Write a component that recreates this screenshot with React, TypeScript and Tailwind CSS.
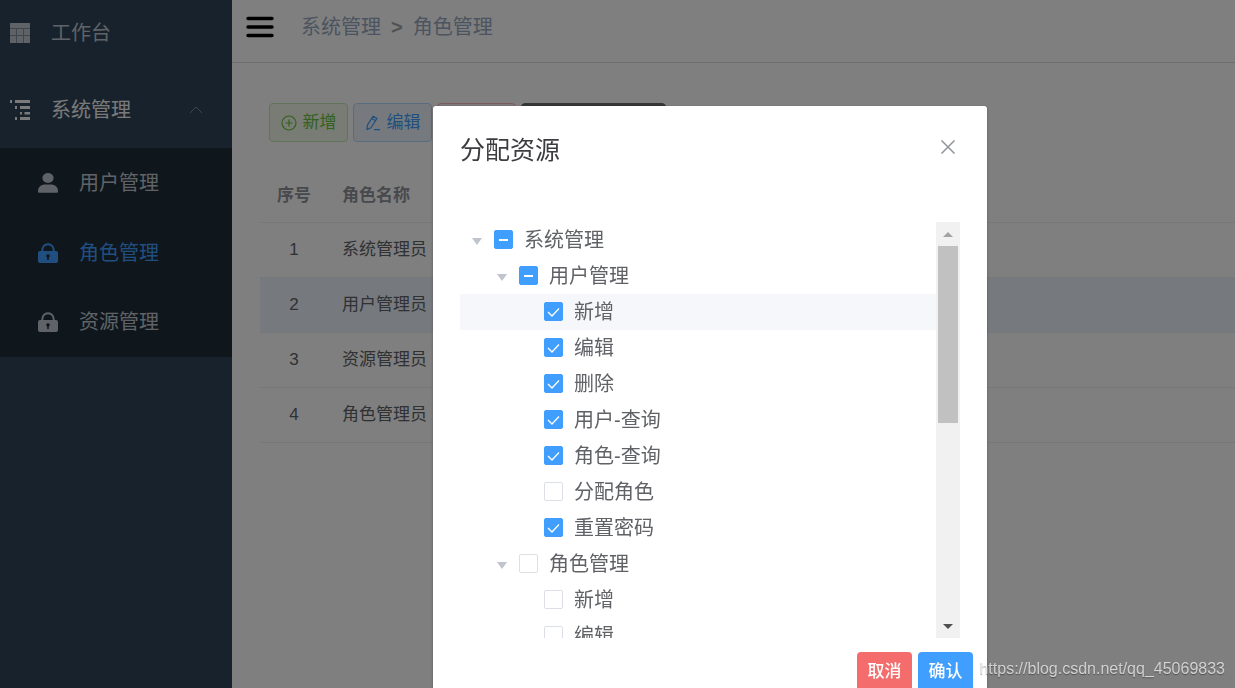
import React, { useState } from "react";

type CheckState = "checked" | "partial" | "empty";

interface TreeNode {
  id: string;
  label: string;
  level: 0 | 1 | 2;
  state: CheckState;
  active?: boolean;
}

const TREE: TreeNode[] = [
  { id: "system", label: "系统管理", level: 0, state: "partial" },
  { id: "user", label: "用户管理", level: 1, state: "partial" },
  { id: "user-add", label: "新增", level: 2, state: "checked", active: true },
  { id: "user-edit", label: "编辑", level: 2, state: "checked" },
  { id: "user-delete", label: "删除", level: 2, state: "checked" },
  { id: "user-query", label: "用户-查询", level: 2, state: "checked" },
  { id: "user-role-query", label: "角色-查询", level: 2, state: "checked" },
  { id: "user-assign", label: "分配角色", level: 2, state: "empty" },
  { id: "user-reset", label: "重置密码", level: 2, state: "checked" },
  { id: "role", label: "角色管理", level: 1, state: "empty" },
  { id: "role-add", label: "新增", level: 2, state: "empty" },
  { id: "role-edit", label: "编辑", level: 2, state: "empty" },
];

const ROLES = ["系统管理员", "用户管理员", "资源管理员", "角色管理员"];

const INDENT = ["pl-0", "pl-[25px]", "pl-[50px]"];

function GridIcon() {
  return (
    <svg viewBox="0 0 20 20" className="w-5 h-5 shrink-0" fill="currentColor">
      <path d="M0 0h20v20H0z" opacity="0.55" />
      <path d="M0 0h20v5H0zM0 6h6v6H0zM7 6h6v6H7zM14 6h6v6h-6zM0 13h6v7H0zM7 13h6v7H7zM14 13h6v7h-6z" />
    </svg>
  );
}

function TreeIcon() {
  return (
    <svg viewBox="0 0 20 20" className="w-5 h-5 shrink-0" fill="currentColor">
      <path d="M0 0h2v3H0zM5 0h15v3H5zM5 6h2v3H5zM10 6h10v3H10zM10 12h2v2.500h-2zM14.500 12H20v2.500h-5.500zM5 17h2v3H5zM10 17h10v3H10z" />
    </svg>
  );
}

function UserIcon() {
  return (
    <svg viewBox="0 0 20 20" className="w-5 h-5 shrink-0" fill="currentColor">
      <ellipse cx="10" cy="5" rx="5.600" ry="5" />
      <path d="M0 18.200C0 14 3.200 11.600 7 11.600h6c3.800 0 7 2.400 7 6.600 0 1-.6 1.600-1.600 1.600H1.600C.6 19.800 0 19.200 0 18.200z" />
    </svg>
  );
}

function LockIcon() {
  return (
    <svg viewBox="0 0 20 20" className="w-5 h-5 shrink-0" fill="currentColor">
      <path d="M4.200 8.500C4.200 4 6.500 1.200 10 1.200s5.800 2.800 5.800 7.300" fill="none" stroke="currentColor" strokeWidth="2" />
      <path
        fillRule="evenodd"
        d="M2 8h16a2 2 0 0 1 2 2v8a2 2 0 0 1-2 2H2a2 2 0 0 1-2-2v-8a2 2 0 0 1 2-2zM10 11.200a1.800 1.800 0 0 0-.8 3.400V17h1.600v-2.400a1.800 1.800 0 0 0-.8-3.400z"
      />
    </svg>
  );
}

function Sidebar() {
  return (
    <nav className="w-[232px] shrink-0 bg-[#30455a] text-xl text-[#bfc6d0]">
      <a href="#dashboard" className="flex items-center gap-[21px] h-[71px] pb-[6px] pl-[10px]">
        <GridIcon />
        工作台
      </a>
      <button type="button" className="flex items-center gap-[21px] w-full h-[77px] pl-[10px] pr-[29px] text-[#f4f4f5]">
        <TreeIcon />
        <span>系统管理</span>
        <svg viewBox="0 0 14 8" className="w-[14px] h-2 ml-auto text-[#7f8a96]" fill="none" stroke="currentColor">
          <path d="M1 7l6-6 6 6" />
        </svg>
      </button>
      <div className="bg-[#1f2e39]">
        <a href="#users" className="flex items-center gap-[21px] h-[70px] pl-[38px]">
          <UserIcon />
          用户管理
        </a>
        <a href="#roles" className="flex items-center gap-[21px] h-[69px] pl-[38px] text-[#409eff]">
          <LockIcon />
          角色管理
        </a>
        <a href="#resources" className="flex items-center gap-[21px] h-[70px] pl-[38px]">
          <LockIcon />
          资源管理
        </a>
      </div>
    </nav>
  );
}

function Header() {
  return (
    <header className="flex items-center h-[63px] pb-2 pl-[14px] border-b border-[#d8dce5]">
      <button type="button" aria-label="菜单" className="text-black">
        <svg viewBox="0 0 28 22" className="w-7 h-[22px]" stroke="currentColor" strokeWidth="3.400" strokeLinecap="round">
          <path d="M2 2.500h24M2 11h24M2 19.500h24" />
        </svg>
      </button>
      <div className="flex items-center gap-[10px] ml-[27px] text-xl text-[#97a8be]">
        <a href="#system">系统管理</a>
        <span className="font-bold text-[#a0a4aa]">&gt;</span>
        <span>角色管理</span>
      </div>
    </header>
  );
}

function Toolbar() {
  const base = "flex items-center justify-center gap-[6px] h-[39px] border rounded-[4px] text-[17px]";
  return (
    <div className="flex gap-[5px] pl-[9px]">
      <button type="button" className={`${base} w-[79px] bg-[#f0f9eb] border-[#c2e7b0] text-[#67c23a]`}>
        <svg viewBox="0 0 16 16" className="w-4 h-4" fill="none" stroke="currentColor" strokeWidth="1.200">
          <circle cx="8" cy="8" r="7" />
          <path d="M8 4.500v7M4.500 8h7" />
        </svg>
        新增
      </button>
      <button type="button" className={`${base} w-[79px] bg-[#ecf5ff] border-[#b3d8ff] text-[#409eff]`}>
        <svg viewBox="0 0 16 16" className="w-4 h-4" fill="none" stroke="currentColor" strokeWidth="1.200" strokeLinejoin="round">
          <path d="M8.200 1.200l3.800 2.200-6 9.400L2 14.600l.4-4.400zM6.800 3.600l3.800 2.200M9 14.600h6" />
        </svg>
        编辑
      </button>
      <button type="button" className={`${base} w-[79px] bg-[#fef0f0] border-[#fbb4b4] text-[#f56c6c]`}>
        删除
      </button>
      <button type="button" className={`${base} w-[145px] bg-[#6b6b6b] border-[#6b6b6b] text-white`}>
        分配资源
      </button>
    </div>
  );
}

function RoleTable() {
  return (
    <table className="w-full mt-[25px] text-[17px] text-[#606266]">
      <thead>
        <tr className="h-[55px] border-b border-[#ebeef5] text-[#909399]">
          <th className="w-[68px] pt-[3px] font-bold">序号</th>
          <th className="pt-[3px] pl-[14px] text-left font-bold">角色名称</th>
        </tr>
      </thead>
      <tbody>
        {ROLES.map((name, i) => (
          <tr key={name} className={`h-[55px] border-b border-[#ebeef5] ${i === 1 ? "bg-[#ecf5ff]" : ""}`}>
            <td className="text-center">{i + 1}</td>
            <td className="pl-[14px]">{name}</td>
          </tr>
        ))}
      </tbody>
    </table>
  );
}

function TreeRow({ node, onToggle }: { node: TreeNode; onToggle: (id: string) => void }) {
  const filled = node.state !== "empty";
  return (
    <li className={`flex items-center h-9 ${INDENT[node.level]} ${node.active ? "bg-[#f5f7fa]" : ""}`}>
      <span className="flex justify-center w-[34px] pt-[2px] shrink-0">
        {node.level < 2 && (
          <svg viewBox="0 0 10 7" className="w-[10px] h-[7px] text-[#c0c4cc]" fill="currentColor">
            <path d="M0 0h10L5 7z" />
          </svg>
        )}
      </span>
      <label className="flex items-center gap-[11px]">
        <span className="grid place-items-center pb-[2px]">
          <input
            type="checkbox"
            checked={node.state === "checked"}
            ref={(el) => {
              if (el) el.indeterminate = node.state === "partial";
            }}
            onChange={() => onToggle(node.id)}
            className={`appearance-none col-start-1 row-start-1 w-[19px] h-[19px] border rounded-[2px] ${filled ? "bg-[#409eff] border-[#409eff]" : "bg-white border-[#dcdfe6]"}`}
          />
          {filled && (
            <svg viewBox="0 0 19 19" className="col-start-1 row-start-1 w-[19px] h-[19px] pointer-events-none" fill="none" stroke="white">
              {node.state === "checked" ? (
                <path d="M4 10l4 4 7-7.500" strokeWidth="1.300" />
              ) : (
                <path d="M5 10h9" strokeWidth="2" />
              )}
            </svg>
          )}
        </span>
        {node.label}
      </label>
    </li>
  );
}

function ScrollBar() {
  return (
    <div className="flex flex-col items-center w-6 shrink-0 bg-[#f1f1f1]">
      <button type="button" aria-label="向上" className="flex items-center justify-center w-full h-6">
        <svg viewBox="0 0 10 5" className="w-[10px] h-[5px] text-[#a3a3a3]" fill="currentColor">
          <path d="M0 5h10L5 0z" />
        </svg>
      </button>
      <div className="w-5 h-[177px] bg-[#c1c1c1]" />
      <button type="button" aria-label="向下" className="flex items-center justify-center w-full h-6 mt-auto">
        <svg viewBox="0 0 10 5" className="w-[10px] h-[5px] text-[#505050]" fill="currentColor">
          <path d="M0 0h10L5 5z" />
        </svg>
      </button>
    </div>
  );
}

function ResourceDialog() {
  const [nodes, setNodes] = useState(TREE);

  const toggle = (id: string) =>
    setNodes((prev) => prev.map((n) => (n.id === id ? { ...n, state: n.state === "checked" ? "empty" : "checked" } : n)));

  return (
    <div role="dialog" aria-labelledby="dialog-title" className="flex-1 bg-white rounded-[3px] shadow-[0_1px_3px_rgba(0,0,0,0.3)]">
      <div className="flex justify-between items-start pt-[27px] px-[27px]">
        <h2 id="dialog-title" className="text-[25px] leading-[34px] text-[#3c3d40]">
          分配资源
        </h2>
        <button type="button" aria-label="关闭" className="p-[5px] pt-[7px] text-[#909399]">
          <svg viewBox="0 0 14 14" className="w-[14px] h-[14px]" fill="none" stroke="currentColor" strokeWidth="1.500">
            <path d="M.5.5l13 13M13.500.5l-13 13" />
          </svg>
        </button>
      </div>
      <div className="flex h-[416px] mt-[55px] mx-[27px]">
        <ul className="flex-1 overflow-hidden text-xl text-[#606266]">
          {nodes.map((n) => (
            <TreeRow key={n.id} node={n} onToggle={toggle} />
          ))}
        </ul>
        <ScrollBar />
      </div>
      <div className="flex justify-end gap-[6px] p-[14px] text-[17px] font-medium text-white">
        <button type="button" className="w-[55px] h-[39px] rounded-[4px] bg-[#f56c6c]">
          取消
        </button>
        <button type="button" className="w-[55px] h-[39px] rounded-[4px] bg-[#409eff]">
          确认
        </button>
      </div>
    </div>
  );
}

export default function App() {
  return (
    <div className="flex h-screen overflow-hidden bg-white font-['Liberation_Sans','Noto_Sans_CJK_SC',sans-serif]">
      <Sidebar />
      <main className="flex-1">
        <Header />
        <div className="pt-10 pl-7">
          <Toolbar />
          <RoleTable />
        </div>
      </main>
      <div className="fixed inset-0 flex items-start overflow-hidden pt-[106px] pl-[433px] pr-[248px] bg-black/50">
        <ResourceDialog />
      </div>
      <span className="fixed right-[10px] bottom-[7px] text-base text-white/70 [text-shadow:0_1px_1px_rgba(0,0,0,0.4)]">
        https://blog.csdn.net/qq_45069833
      </span>
    </div>
  );
}
